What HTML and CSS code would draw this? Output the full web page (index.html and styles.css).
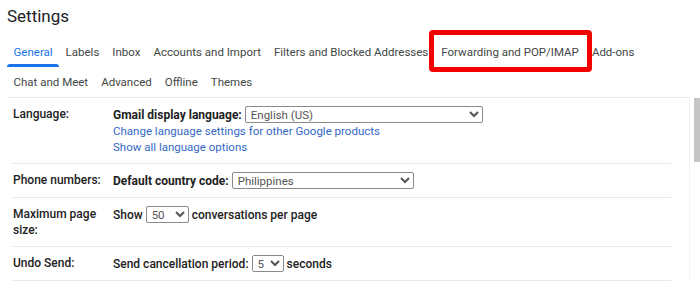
FILE: index.html
```html
<!DOCTYPE html>
<html lang="en">
<head>
    <meta charset="UTF-8">
    <title>Settings</title>
    <link rel="stylesheet" href="styles.css">
</head>
<body>

<div class="page">
    <h1 class="title">Settings</h1>

    <!-- Tabs -->
    <div class="tabs">
        <div class="tab-row">
            <a class="tab active">General</a>
            <a class="tab">Labels</a>
            <a class="tab">Inbox</a>
            <a class="tab">Accounts and Import</a>
            <a class="tab">Filters and Blocked Addresses</a>
            <a class="tab highlighted">Forwarding and POP/IMAP</a>
            <a class="tab">Add-ons</a>
        </div>
        <div class="tab-row">
            <a class="tab">Chat and Meet</a>
            <a class="tab">Advanced</a>
            <a class="tab">Offline</a>
            <a class="tab">Themes</a>
        </div>
    </div>

    <!-- Settings table -->
    <div class="panel">
        <div class="setting">
            <div class="setting-label">Language:</div>
            <div class="setting-value">
                <div class="line">
                    <b>Gmail display language:</b>
                    <select class="dropdown dd-lang"><option>English (US)</option></select>
                </div>
                <a class="link">Change language settings for other Google products</a>
                <a class="link">Show all language options</a>
            </div>
        </div>

        <div class="setting">
            <div class="setting-label">Phone numbers:</div>
            <div class="setting-value">
                <div class="line">
                    <b>Default country code:</b>
                    <select class="dropdown dd-country"><option>Philippines</option></select>
                </div>
            </div>
        </div>

        <div class="setting">
            <div class="setting-label">Maximum page size:</div>
            <div class="setting-value">
                <div class="line">
                    Show
                    <select class="dropdown dd-size"><option>50</option></select>
                    conversations per page
                </div>
            </div>
        </div>

        <div class="setting">
            <div class="setting-label">Undo Send:</div>
            <div class="setting-value">
                <div class="line">
                    Send cancellation period:
                    <select class="dropdown dd-undo"><option>5</option></select>
                    seconds
                </div>
            </div>
        </div>

        <div class="scroll-thumb"></div>
    </div>
</div>

</body>
</html>
```

FILE: styles.css
```css
/* General Styling */
* {
    box-sizing: border-box;
    margin: 0;
    padding: 0;
    font-family: Roboto, "Liberation Sans", Arial, sans-serif;
}

body {
    background: white;
    color: #222;
    overflow: hidden;
}

.page {
    position: relative;
    width: 700px;
}

.title {
    font-size: 17px;
    font-weight: 400;
    line-height: 20px;
    color: #202124;
    padding: 6px 0 10px 7px;
    height: 36px;
}

/* Tabs */
.tabs {
    padding-left: 7px;
}

.tab-row {
    display: flex;
}

.tab {
    position: relative;
    display: block;
    padding: 7.5px 6.5px 7px;
    font-size: 11.5px;
    line-height: 16px;
    color: #444746;
    cursor: pointer;
}

.tab.active {
    color: #1a73e8;
}

.tab.active::after {
    content: "";
    position: absolute;
    left: 0;
    right: 0;
    bottom: 0;
    height: 3px;
    background: #1a73e8;
    border-radius: 3px 3px 0 0;
}

/* red callout over the tab */
.tab.highlighted::before {
    content: "";
    position: absolute;
    left: -5.5px;
    right: -6.5px;
    top: -6px;
    bottom: -5px;
    border: 5px solid #f40000;
    border-radius: 4px;
}

/* Settings panel */
.panel {
    position: relative;
    margin-left: 7px;
    width: 683px;
    border-top: 1px solid #ececec;
    border-right: 1px solid #f3f3f3;
    padding-right: 18px;
}

.setting {
    display: flex;
    margin-left: 5px;
    padding: 8px 0;
    border-bottom: 1px solid #e8e8e8;
    font-size: 12px;
    line-height: 16px;
}

.setting-label {
    width: 101px;
    flex-shrink: 0;
    padding-left: 1px;
    padding-right: 10px;
    font-weight: 500;
    color: #222;
}

.setting-value {
    font-weight: 500;
    color: #222;
}

.setting-value b {
    font-weight: 700;
}

.line {
    display: flex;
    align-items: center;
    gap: 3px;
    min-height: 17px;
}

.link {
    display: block;
    font-size: 11.5px;
    font-weight: 400;
    color: #3468c4;
    cursor: pointer;
}

.dropdown {
    height: 17px;
    font-size: 11.5px;
    font-weight: 400;
    color: #555;
    border: 1px solid #8a8a8a;
    border-radius: 2px;
    background: white;
    padding: 0 1px;
}

.dd-lang {
    width: 238px;
}

.dd-country {
    width: 182px;
}

.dd-size {
    width: 43px;
}

.dd-undo {
    width: 32px;
}

.scroll-thumb {
    position: absolute;
    top: 0;
    right: -11px;
    width: 6px;
    height: 64px;
    background: #c6c6c6;
}
```
